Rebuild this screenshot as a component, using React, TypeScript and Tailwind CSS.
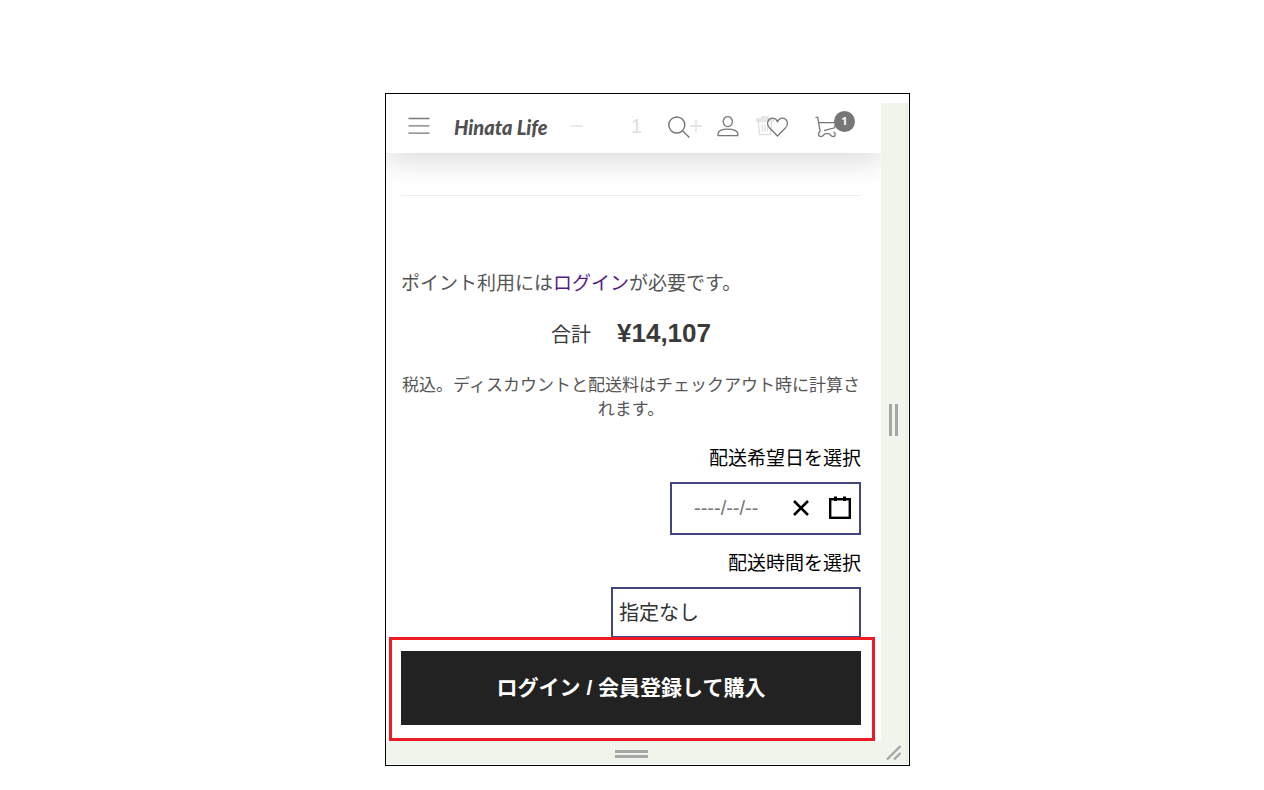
import { useState } from "react";

function MenuIcon() {
  return (
    <svg width="22" height="22" viewBox="0 0 22 22" fill="none" stroke="currentColor" strokeWidth="1.3">
      <path d="M0.5 2.5H21.5M0.5 9.8H21.5M0.5 17.2H21.5" />
    </svg>
  );
}

function SearchIcon() {
  return (
    <svg width="22" height="22" viewBox="0 0 22 22" fill="none" stroke="currentColor" strokeWidth="1.4">
      <circle cx="8.8" cy="9" r="8" />
      <path d="M14.5 14.7L21.4 21.5" />
    </svg>
  );
}

function UserIcon() {
  return (
    <svg width="22" height="22" viewBox="0 0 22 22" fill="none" stroke="currentColor" strokeWidth="1.3">
      <ellipse cx="10.8" cy="5.6" rx="4.6" ry="5" />
      <path d="M1 19.6V17.8C1 15 4.6 13.2 10.8 13.2S20.8 15 20.8 17.8V19.6Z" />
    </svg>
  );
}

function HeartIcon() {
  return (
    <svg width="22" height="22" viewBox="0 0 22 22" fill="none" stroke="currentColor" strokeWidth="1.3">
      <path d="M11.5 20L3.7 12C-0.7 7.2 2.7 2.2 6.5 2.2C9.1 2.2 10.5 3.6 11.5 5.6C12.5 3.6 13.9 2.2 16.5 2.2C20.3 2.2 23.7 7.2 19.3 12Z" />
    </svg>
  );
}

function CartIcon() {
  return (
    <svg width="24" height="24" viewBox="0 0 24 24" fill="none" stroke="currentColor" strokeWidth="1.3">
      <path d="M0.5 2.4H2.7L5.2 16.6M3.5 7.6H21L19.5 12.8L9 15.6" />
      <path d="M5.2 16.6C2.8 17.4 3 21.6 6 21.6C8.8 21.6 8.6 18.6 10.8 18.6H13.6C15.4 18.6 15.4 21.6 18 21.6C20.8 21.6 21 18 18.6 16.8" />
    </svg>
  );
}

function TrashIcon() {
  return (
    <svg width="18" height="20" viewBox="0 0 18 20" fill="none" stroke="currentColor" strokeWidth="1.3">
      <path d="M0.7 5V3H17.3V5ZM6 3V1H12V3M2.2 5L3.6 18.6H14.4L15.8 5M6.4 8.5V15.5M9 8.5V15.5M11.6 8.5V15.5" />
    </svg>
  );
}

function QuantityRow() {
  return (
    <div className="absolute inset-y-0 right-0 flex items-center pt-1 pr-[107px] text-[#dedede]" aria-hidden="true">
      <svg width="13" height="12" viewBox="0 0 13 12" stroke="currentColor" strokeWidth="1.3">
        <path d="M0 6H12" />
      </svg>
      <span className="ml-[47px] w-3 text-[20px]">1</span>
      <svg className="ml-[47px]" width="12" height="12" viewBox="0 0 12 12" stroke="currentColor" strokeWidth="1.3">
        <path d="M0 6H12M6 0V12" />
      </svg>
      <span className="ml-[54px]">
        <TrashIcon />
      </span>
    </div>
  );
}

function Header() {
  return (
    <header className="relative flex h-[59px] items-center bg-white pt-1.5 pr-[42px] pl-[22px] text-[#777] shadow-[0_10px_28px_0_rgba(0,0,0,0.13)]">
      <QuantityRow />
      <button type="button" aria-label="メニュー" className="relative">
        <MenuIcon />
      </button>
      <a
        href="#"
        className="relative ml-6 font-['Lato','Liberation_Sans',sans-serif] text-[20px] leading-7 font-black whitespace-nowrap text-[#505050] italic"
      >
        Hinata Life
      </a>
      <div className="relative ml-auto flex items-center gap-[27px]">
        <button type="button" aria-label="検索">
          <SearchIcon />
        </button>
        <button type="button" aria-label="アカウント">
          <UserIcon />
        </button>
        <button type="button" aria-label="お気に入り">
          <HeartIcon />
        </button>
        <button type="button" aria-label="カート" className="relative">
          <CartIcon />
          <span className="absolute -top-1 -right-4 flex size-[21px] items-center justify-center rounded-full bg-[#777] font-['Noto_Sans',sans-serif] text-[11px] font-bold text-white">
            1
          </span>
        </button>
      </div>
    </header>
  );
}

function CheckoutForm() {
  const [date, setDate] = useState("");
  const [time, setTime] = useState("none");

  return (
    <form className="flex flex-col pr-5 pb-4 pl-[15px]" onSubmit={(e) => e.preventDefault()}>
      <hr className="mt-[42px] border-[#ededed]" />
      <p className="mt-[74px] text-[19px] leading-7 text-[#555]">
        ポイント利用には
        <a href="#" className="text-[#551a8b]">
          ログイン
        </a>
        が必要です。
      </p>
      <div className="mt-[17px] flex h-9 items-center justify-center gap-[26px] text-[#3a3a3a]">
        <span className="pt-1 text-[20px]">合計</span>
        <span className="text-[26px] font-bold">¥14,107</span>
      </div>
      <p className="mt-[23px] text-center text-[17px] leading-6 text-[#555]">
        税込。ディスカウントと配送料はチェックアウト時に計算されます。
      </p>

      <label htmlFor="delivery-date" className="mt-[23px] self-end text-[19px] leading-7 text-black">
        配送希望日を選択
      </label>
      <div className="mt-[9px] flex h-[53px] w-[191px] items-center self-end border-2 border-[#434580] pr-2 pb-0.5 pl-[22px]">
        <input
          id="delivery-date"
          type="text"
          value={date}
          onChange={(e) => setDate(e.target.value)}
          placeholder="----/--/--"
          className="w-full min-w-0 text-[20px] text-[#333] outline-none placeholder:text-[#777]"
        />
        <button type="button" aria-label="クリア" onClick={() => setDate("")} className="shrink-0">
          <svg width="16" height="16" viewBox="0 0 16 16" fill="none" stroke="#000" strokeWidth="2.6">
            <path d="M1 1L15 15M15 1L1 15" />
          </svg>
        </button>
        <button type="button" aria-label="カレンダー" className="ml-5 shrink-0">
          <svg width="22" height="24" viewBox="0 0 22 24" fill="none" stroke="#000">
            <rect x="1.2" y="3.2" width="19.6" height="18.6" strokeWidth="2.4" />
            <path d="M6.5 0.5V5M15.5 0.5V5" strokeWidth="3" />
          </svg>
        </button>
      </div>

      <label htmlFor="delivery-time" className="mt-[15px] self-end text-[19px] leading-7 text-black">
        配送時間を選択
      </label>
      <select
        id="delivery-time"
        value={time}
        onChange={(e) => setTime(e.target.value)}
        className="mt-[9px] h-[51px] w-[250px] appearance-none self-end border-2 border-[#434580] bg-white px-1.5 pt-px text-[20px] text-[#333]"
      >
        <option value="none">指定なし</option>
      </select>

      <div className="relative mt-[13px]">
        <button type="submit" className="h-[74px] w-full bg-[#222] text-[21px] font-bold text-white">
          ログイン / 会員登録して購入
        </button>
        <div className="pointer-events-none absolute -top-3.5 -right-3.5 -bottom-4 -left-3 border-3 border-[#ed1c24]" />
      </div>
    </form>
  );
}

export default function App() {
  return (
    <div className="flex justify-center bg-white pt-[93px] pb-6 pl-[31px] font-['Liberation_Sans','Noto_Sans_CJK_JP',sans-serif]">
      <div className="w-full max-w-[525px] border border-black pb-px">
        <div className="flex">
          <main className="min-w-0 flex-1 overflow-hidden">
            <Header />
            <CheckoutForm />
          </main>
          <div className="mt-[9px] mr-px flex w-[27px] items-center gap-[3px] border-r-2 border-[#e3ecdd] bg-[#eff5ea] pb-1 pl-2">
            <span className="h-8 w-[3px] bg-[#a6a6a6]" />
            <span className="h-8 w-[3px] bg-[#a6a6a6]" />
          </div>
        </div>
        <div className="mr-px flex h-[23px] items-center border-r-2 border-[#e3ecdd] bg-[#eff5ea]">
          <div className="flex flex-1 flex-col items-center gap-0.5 pt-0.5 pr-2.5">
            <span className="h-[3px] w-[33px] bg-[#a6a6a6]" />
            <span className="h-[3px] w-[33px] bg-[#a6a6a6]" />
          </div>
          <svg className="mr-1" width="16" height="16" viewBox="0 0 16 16" stroke="#a6a6a6" strokeWidth="2.4">
            <path d="M1 14.5L14.5 1M8 14.5L14.5 8" />
          </svg>
        </div>
      </div>
    </div>
  );
}
